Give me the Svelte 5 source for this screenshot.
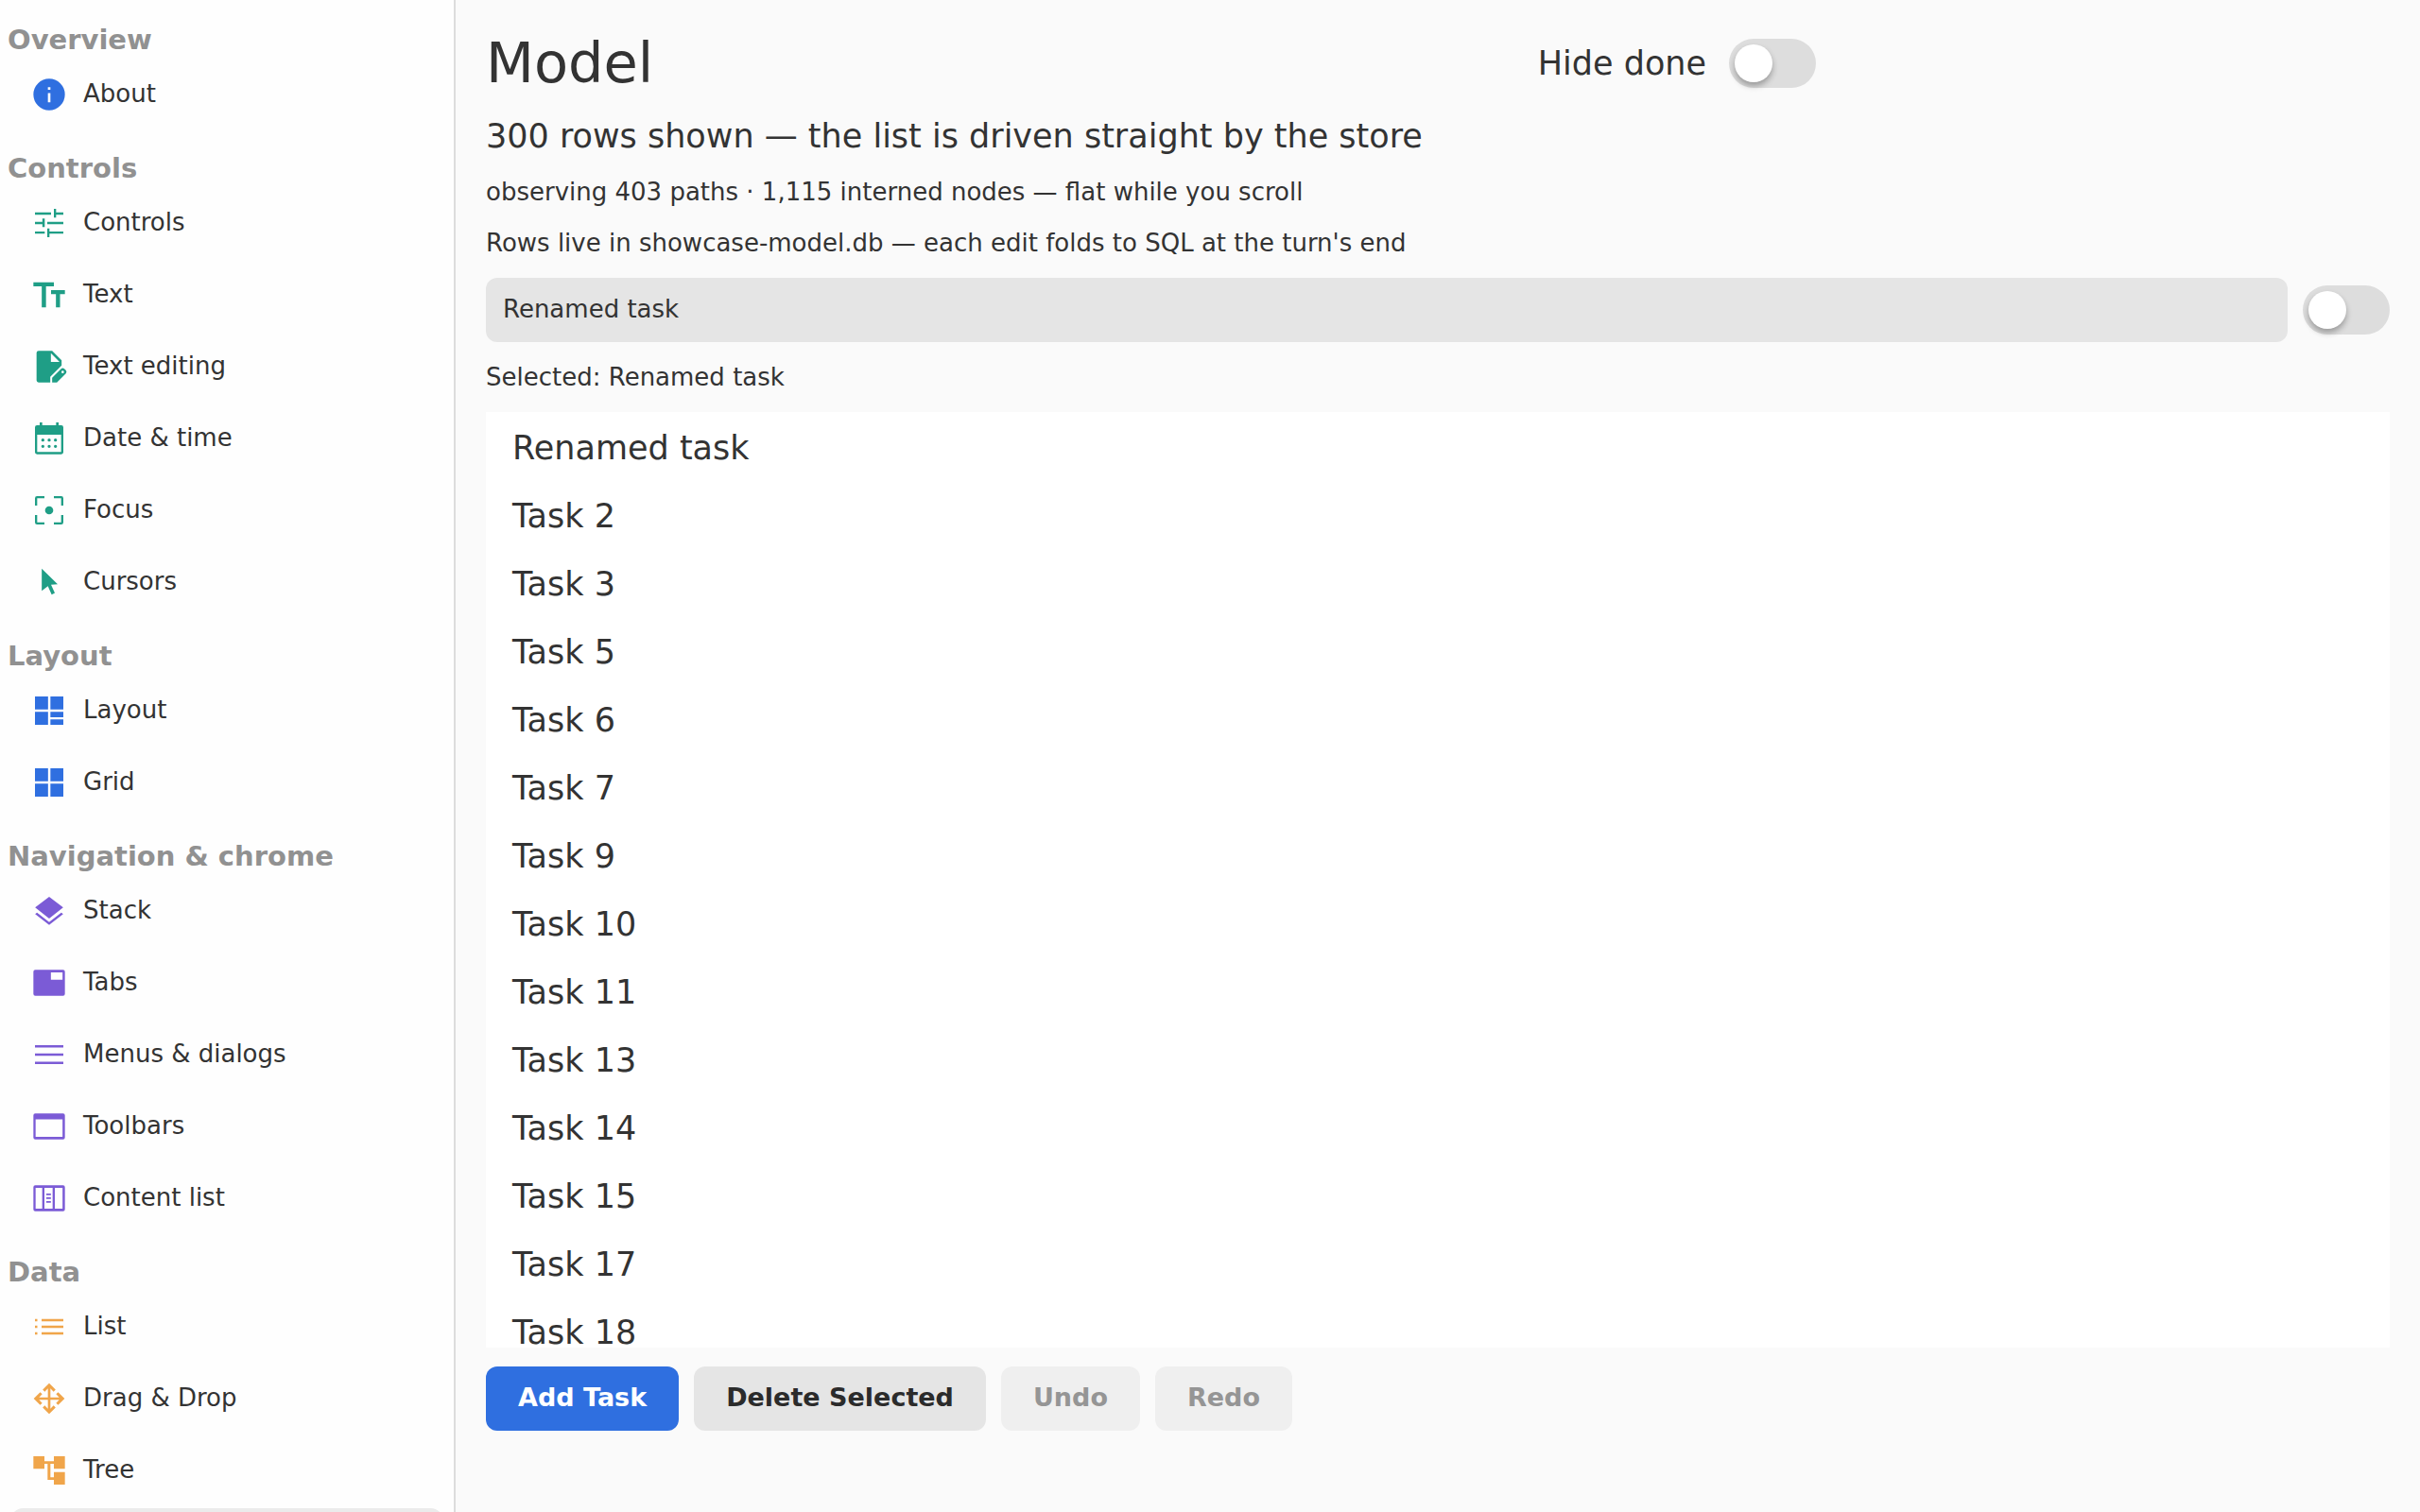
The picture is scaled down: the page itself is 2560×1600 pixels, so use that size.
<script>
  const info =
    'M12 2a10 10 0 1 0 0 20a10 10 0 0 0 0-20zM11.2 7.3h1.6v1.7h-1.6zM11.2 11.1h1.6v5.9h-1.6z';
  const tune =
    'M3 5.2h10.2v1.5H3zM15 3h1.4v2.2H21v1.5h-4.6v1.8H15zM3 11.3h4.7V9.2h1.5v5.4H7.7v-1.9H3zM10.8 11.3H21v1.4H10.8zM3 17.4h6.2v1.4H3zM10.8 15.5h1.4v1.9H21v1.4h-8.8V21h-1.4z';
  const textSize =
    'M2 4h13v2.6h-5V20H7.3V6.6H2zM13.2 9H22v2.6h-3.1V20h-2.6v-8.4h-3.1z';
  const docEdit =
    'M5.3 1.9h8.6l6 6v3.3l-7.2 7.2V22H5.3A1.4 1.4 0 0 1 4 20.7V3.2A1.4 1.4 0 0 1 5.3 1.9zM13.1 3.5V9h5.5zM13.9 22v-3l5.7-5.7a1.5 1.5 0 0 1 2 0l1 1a1.5 1.5 0 0 1 0 2L16.9 22zM20.6 14.6a.8.8 0 1 0 0 1.6a.8.8 0 0 0 0-1.6z';
  const calendar =
    'M6 1.8h1.6v1.8h8.8V1.8H18v1.8h1.7A1.3 1.3 0 0 1 21 4.9v15.8a1.3 1.3 0 0 1-1.3 1.3H4.3A1.3 1.3 0 0 1 3 20.7V4.9A1.3 1.3 0 0 1 4.3 3.6H6zM4.4 9.6v11h15.2v-11zM7 13a1 1 0 1 0 2 0a1 1 0 1 0-2 0M11 13a1 1 0 1 0 2 0a1 1 0 1 0-2 0M15 13a1 1 0 1 0 2 0a1 1 0 1 0-2 0M7 17a1 1 0 1 0 2 0a1 1 0 1 0-2 0M11 17a1 1 0 1 0 2 0a1 1 0 1 0-2 0M15 17a1 1 0 1 0 2 0a1 1 0 1 0-2 0';
  const focus =
    'M3 9V4.3A1.3 1.3 0 0 1 4.3 3H9v1.4H4.4V9zM15 3h4.7A1.3 1.3 0 0 1 21 4.3V9h-1.4V4.4H15zM3 15h1.4v4.6H9V21H4.3A1.3 1.3 0 0 1 3 19.7zM19.6 15H21v4.7a1.3 1.3 0 0 1-1.3 1.3H15v-1.4h4.6zM9.4 12a2.6 2.6 0 1 0 5.2 0a2.6 2.6 0 1 0-5.2 0';
  const cursor = 'M7.3 3.5L17.4 13.3l-4.2.4l2.4 5.2l-2 1l-2.4-5.4l-3.9 3z';
  const dashboard =
    'M3 3h8.3v8.3H3zM12.8 3H21v8.3h-8.2zM3 12.7h8.3V21H3zM12.8 12.7H21v3.5h-8.2zM12.8 17.5H21V21h-8.2z';
  const grid = 'M3 3h8.3v8.3H3zM12.8 3H21v8.3h-8.2zM3 12.7h8.3V21H3zM12.8 12.7H21V21h-8.2z';
  const layers =
    'M12 3l8.9 6.8l-8.9 7l-8.9-7zM3.1 13.9l1.2-.9l7.7 6l7.7-6l1.2.9l-8.9 6.9z';
  const tab =
    'M3.2 3.8h17.6A1.2 1.2 0 0 1 22 5v14a1.2 1.2 0 0 1-1.2 1.2H3.2A1.2 1.2 0 0 1 2 19V5a1.2 1.2 0 0 1 1.2-1.2zM13.1 5.4V10h7.4V5.4z';
  const menu = 'M3 6h18v1.5H3zM3 11.3h18v1.4H3zM3 16.5h18V18H3z';
  const toolbar =
    'M3.2 3.8h17.6A1.2 1.2 0 0 1 22 5v14a1.2 1.2 0 0 1-1.2 1.2H3.2A1.2 1.2 0 0 1 2 19V5a1.2 1.2 0 0 1 1.2-1.2zM3.4 7.5v11.1h17.1V7.5z';
  const columns =
    'M3.2 3.8h17.6A1.2 1.2 0 0 1 22 5v14a1.2 1.2 0 0 1-1.2 1.2H3.2A1.2 1.2 0 0 1 2 19V5a1.2 1.2 0 0 1 1.2-1.2zM3.4 5.4v13.2h4.2V5.4zM9 5.4v13.2h5.2V5.4zM15.6 5.4v13.2h4.9V5.4zM10.2 9h2.9v1h-2.9zM10.2 11.4h2.9v1h-2.9zM10.2 13.8h2.9v1h-2.9z';
  const list =
    'M3 7h1.5v1.5H3zM3 11.3h1.5v1.4H3zM3 15.5h1.5V17H3zM7.2 7H21v1.5H7.2zM7.2 11.3H21v1.4H7.2zM7.2 15.5H21V17H7.2z';
  const move =
    'M12 2.2l4.1 4.1l-1.3 1.3l-2-2v5.6h5.6l-2-2l1.3-1.3l4.1 4.1l-4.1 4.1l-1.3-1.3l2-2h-5.6v5.6l2-2l1.3 1.3l-4.1 4.1l-4.1-4.1l1.3-1.3l2 2v-5.6H5.6l2 2l-1.3 1.3L2.2 12l4.1-4.1l1.3 1.3l-2 2h5.6V5.6l-2 2l-1.3-1.3z';
  const tree = 'M2 3h7v3.1h6V3h7v8h-7V7.8h-2.2v8.6H15V13h7v8h-7v-3h-4V7.8H9V11H2z';
  const database =
    'M12 3c5 0 8 1.5 8 3.5v11c0 2-3 3.5-8 3.5s-8-1.5-8-3.5v-11C4 4.5 7 3 12 3z';

  const sections = [
    { title: 'Overview', tone: 'blue', items: [['About', info]] },
    {
      title: 'Controls',
      tone: 'green',
      items: [
        ['Controls', tune],
        ['Text', textSize],
        ['Text editing', docEdit],
        ['Date & time', calendar],
        ['Focus', focus],
        ['Cursors', cursor]
      ]
    },
    { title: 'Layout', tone: 'blue', items: [['Layout', dashboard], ['Grid', grid]] },
    {
      title: 'Navigation & chrome',
      tone: 'purple',
      items: [
        ['Stack', layers],
        ['Tabs', tab],
        ['Menus & dialogs', menu],
        ['Toolbars', toolbar],
        ['Content list', columns]
      ]
    },
    {
      title: 'Data',
      tone: 'orange',
      items: [['List', list], ['Drag & Drop', move], ['Tree', tree], ['Model', database]]
    }
  ];

  let current = $state('Model');
  let hideDone = $state(false);
  let done = $state(false);
  let selected = $state(0);
  let tasks = $state([
    'Renamed task',
    ...[2, 3, 5, 6, 7, 9, 10, 11, 13, 14, 15, 17, 18].map((n) => `Task ${n}`)
  ]);

  function addTask() {
    tasks.push('New task');
  }

  function deleteSelected() {
    if (tasks.length > 1) {
      tasks.splice(selected, 1);
      selected = Math.min(selected, tasks.length - 1);
    }
  }
</script>

<div class="app">
  <nav class="sidebar" aria-label="Pages">
    {#each sections as section}
      <h2>{section.title}</h2>
      <ul>
        {#each section.items as [label, path]}
          <li>
            <a
              href="#{label}"
              class:current={current === label}
              onclick={() => (current = label)}
            >
              <svg class={section.tone} viewBox="0 0 24 24" aria-hidden="true">
                <path d={path} fill-rule="evenodd" />
              </svg>
              <span>{label}</span>
            </a>
          </li>
        {/each}
      </ul>
    {/each}
  </nav>

  <main>
    <header>
      <h1>Model</h1>
      <label class="hide-done">
        Hide done
        <input class="switch" type="checkbox" role="switch" bind:checked={hideDone} />
      </label>
    </header>

    <div class="intro">
      <p class="lead">300 rows shown — the list is driven straight by the store</p>
      <p>observing 403 paths · 1,115 interned nodes — flat while you scroll</p>
      <p>Rows live in showcase-model.db — each edit folds to SQL at the turn's end</p>
    </div>

    <div class="editor">
      <input class="field" type="text" aria-label="Task title" bind:value={tasks[selected]} />
      <input class="switch" type="checkbox" role="switch" aria-label="Done" bind:checked={done} />
    </div>

    <p>Selected: {tasks[selected]}</p>

    <ul class="tasks">
      {#each tasks as task, i}
        <li><button type="button" onclick={() => (selected = i)}>{task}</button></li>
      {/each}
    </ul>

    <div class="actions">
      <button type="button" class="primary" onclick={addTask}>Add Task</button>
      <button type="button" onclick={deleteSelected}>Delete Selected</button>
      <button type="button" disabled>Undo</button>
      <button type="button" disabled>Redo</button>
    </div>
  </main>
</div>

<style>
  :global(body) {
    margin: 0;
    background: #fafafa;
  }

  .app {
    display: flex;
    height: 100vh;
    overflow: hidden;
    color: #333;
    font-family: 'DejaVu Sans', sans-serif;
    font-size: 26px;
    line-height: 42px;
  }

  h1,
  h2,
  p,
  ul {
    margin: 0;
    padding: 0;
  }

  ul {
    list-style: none;
  }

  button,
  input {
    margin: 0;
    border: 0;
    color: inherit;
    font: inherit;
  }

  .sidebar {
    box-sizing: border-box;
    flex: none;
    width: 482px;
    padding-top: 2px;
    overflow-y: auto;
    scrollbar-width: none;
    border-right: 2px solid #dcdcdc;
    background: #fefefe;
  }

  h2 {
    padding: 20px 8px 0;
    color: #919191;
    font-size: 29px;
    font-weight: 700;
    line-height: 40px;
  }

  .sidebar li {
    padding: 2px 12px;
  }

  .sidebar a {
    display: flex;
    align-items: center;
    gap: 16px;
    height: 72px;
    padding: 0 20px;
    border-radius: 12px;
    color: inherit;
    text-decoration: none;
  }

  .sidebar a.current {
    background: #ebebeb;
  }

  .sidebar span {
    padding-bottom: 2px;
  }

  svg {
    flex: none;
    width: 40px;
    height: 40px;
    fill: currentColor;
  }

  .blue {
    color: #2f6fe0;
  }

  .green {
    color: #1f9e86;
  }

  .purple {
    color: #7b5bd6;
  }

  .orange {
    color: #f0a54a;
  }

  main {
    display: flex;
    flex: 1;
    flex-direction: column;
    gap: 16px;
    min-width: 0;
    padding: 32px 32px 86px;
  }

  header {
    display: grid;
    grid-template-columns: 11fr auto 6fr;
    align-items: center;
  }

  h1 {
    font-size: 59px;
    font-weight: 400;
    line-height: 70px;
  }

  .hide-done {
    display: flex;
    align-items: center;
    gap: 24px;
    font-size: 35px;
  }

  .intro {
    display: flex;
    flex-direction: column;
    gap: 12px;
  }

  .lead {
    font-size: 35px;
    line-height: 52px;
  }

  .editor {
    display: flex;
    align-items: center;
    gap: 16px;
  }

  .field {
    box-sizing: border-box;
    flex: 1;
    min-width: 0;
    height: 68px;
    padding: 0 18px 2px;
    border-radius: 12px;
    outline: none;
    background: #e5e5e5;
  }

  .switch {
    display: flex;
    box-sizing: border-box;
    flex: none;
    width: 92px;
    height: 52px;
    padding: 6px;
    border-radius: 26px;
    appearance: none;
    background: #ddd;
  }

  .switch::before {
    width: 40px;
    height: 40px;
    border-radius: 50%;
    background: #fff;
    box-shadow: 0 4px 6px rgb(0 0 0 / 30%);
    content: '';
  }

  .switch:checked {
    justify-content: flex-end;
    background: #2f6fe0;
  }

  .tasks {
    flex: 1;
    min-height: 0;
    overflow-y: auto;
    scrollbar-width: none;
    background: #fff;
  }

  .tasks button {
    display: block;
    width: 100%;
    height: 72px;
    padding: 4px 28px 0;
    background: none;
    font-size: 35px;
    line-height: 40px;
    text-align: left;
  }

  .actions {
    display: flex;
    gap: 16px;
    padding-top: 4px;
  }

  .actions button {
    height: 68px;
    padding: 0 34px 2px;
    border-radius: 12px;
    background: #e5e5e5;
    color: #2b2b2b;
    font-size: 27px;
    font-weight: 700;
  }

  .actions .primary {
    background: #2f6fe0;
    color: #fff;
  }

  .actions button:disabled {
    background: #efefef;
    color: #959595;
  }
</style>
